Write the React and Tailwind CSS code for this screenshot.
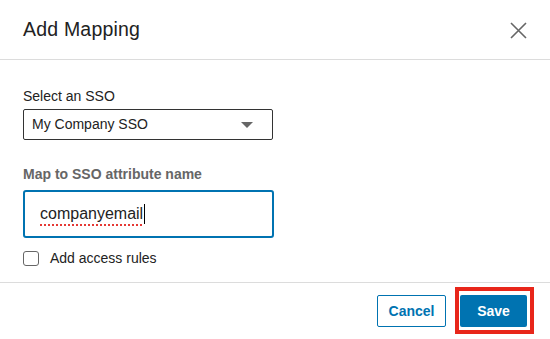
import React from "react";

export default function App() {
  return (
    <div className="w-[550px] h-[339px] bg-white overflow-hidden flex flex-col text-[#1f1f1f]" style={{ fontFamily: '"Liberation Sans", Arial, sans-serif' }}>
      <div className="h-[60px] border-b border-[#dcdcdc] flex items-center justify-between pl-[23px] pr-[23px] shrink-0">
        <div className="text-[19.5px] tracking-[0.2px] text-[#222] leading-none pt-[1px]">Add Mapping</div>
        <svg width="17" height="17" viewBox="0 0 17 17" className="mt-[1px]">
          <path d="M1 1 L16 16 M16 1 L1 16" stroke="#666" strokeWidth="1.6" fill="none" />
        </svg>
      </div>
      <div className="px-[23px] flex flex-col">
        <div className="mt-[26px] text-[14px] leading-[20px] text-[#222]">Select an SSO</div>
        <div className="mt-[3px] w-[250px] h-[31px] border border-[#333] rounded-[2px] flex items-center justify-between pl-[8px] pr-[19px]">
          <span className="text-[14px] text-[#222]">My Company SSO</span>
          <svg width="12" height="6" viewBox="0 0 12 6"><path d="M0 0 L12 0 L6 6 Z" fill="#666" /></svg>
        </div>
        <div className="mt-[24px] text-[14px] leading-[20px] font-semibold text-[#666]">Map to SSO attribute name</div>
        <div className="mt-[6px] w-[251px] h-[48px] border-2 border-[#0073b1] rounded-[3px] flex items-center pl-[15px]">
          <span className="text-[16px] text-[#222] underline decoration-dotted decoration-[#e53935] decoration-2 underline-offset-[5px]">companyemail</span>
          <span className="w-[1px] h-[20px] bg-black ml-[1px]" />
        </div>
        <div className="mt-[10px] h-[20px] flex items-center">
          <div className="w-[16px] h-[15px] border border-[#666] rounded-[3px]" />
          <span className="ml-[11px] text-[14px] text-[#222]">Add access rules</span>
        </div>
      </div>
      <div className="mt-[14px] border-t border-[#dcdcdc] flex justify-end gap-[14px] pt-[12px] pr-[23px]">
        <button className="w-[69px] h-[32px] border border-[#0073b1] rounded-[2px] text-[#0073b1] font-bold text-[14px]">Cancel</button>
        <div className="relative">
          <button className="w-[67px] h-[32px] bg-[#0073b1] rounded-[2px] text-white font-bold text-[14px]">Save</button>
          <div className="absolute left-[-5px] top-[-8px] w-[79px] h-[47px] border-[4px] border-[#e8261a]" />
        </div>
      </div>
    </div>
  );
}
